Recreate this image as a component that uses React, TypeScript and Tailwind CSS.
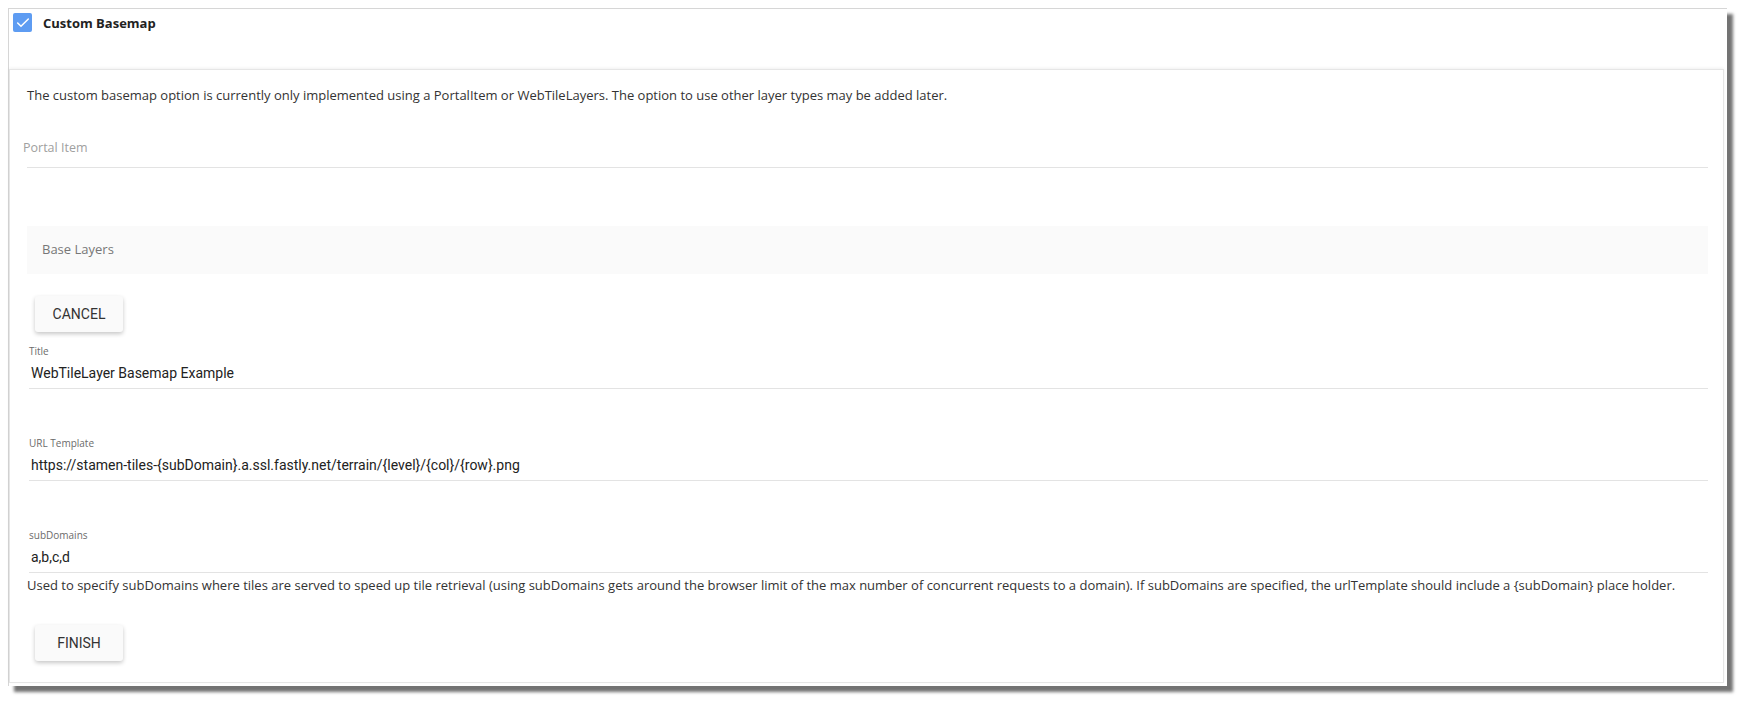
import { Check } from 'lucide-react';

const segoe = "font-['Open_Sans',sans-serif]";
const roboto = "font-['Roboto',sans-serif]";

function Field({ label, value }: { label: string; value: string }) {
  return (
    <div className="ml-[2px] border-b border-[#e3e3e3] pb-[5px]">
      <div className={`${segoe} h-[14px] text-[10px] leading-[14px] text-[#6b6b6b]`}>{label}</div>
      <div className={`${roboto} mt-[5px] h-[20px] pl-[2px] text-[14px] leading-[20px] text-[#222]`}>{value}</div>
    </div>
  );
}

function FlatButton({ children }: { children: string }) {
  return (
    <button
      className={`${roboto} ml-[8px] h-[36px] w-[88px] rounded-[3px] bg-[#fafafa] text-[14px] text-[#333] shadow-[0_2px_4px_rgba(0,0,0,0.22)]`}
    >
      {children}
    </button>
  );
}

export default function App() {
  return (
    <div className="h-[703px] w-[1745px] bg-white pl-[8px] pt-[8px]">
      <div className="flex h-[678px] w-[1719px] flex-col border-l border-t border-[#d6d6d6] bg-white pr-[3px] pb-[3px] shadow-[6px_6px_3px_rgba(0,0,0,0.55)]">
        {/* header */}
        <div className="flex h-[60px] items-start pl-[4px] pt-[4px]">
          <div className="flex h-[19px] w-[19px] items-center justify-center rounded-[2px] bg-[#5e9cf2]">
            <Check className="h-[16px] w-[16px] text-white" strokeWidth={2.25} />
          </div>
          <span className={`${segoe} ml-[11px] text-[13px] font-bold leading-[20px] text-[#222]`}>Custom Basemap</span>
        </div>

        {/* card */}
        <div className="flex flex-1 flex-col border border-[#e6e6e6] pl-[17px] pr-[15px] pt-[17px] shadow-[0_-1px_3px_rgba(0,0,0,0.06)]">
          <p className={`${segoe} text-[13px] leading-[17px] text-[#333]`}>
            The custom basemap option is currently only implemented using a PortalItem or WebTileLayers. The option to use other layer types may be added later.
          </p>

          <div className="mt-[35px] border-b border-[#e3e3e3] pb-[10px]">
            <div className={`${segoe} -ml-[4px] text-[12.5px] leading-[18px] text-[#a0a0a0]`}>Portal Item</div>
          </div>

          <div className={`${segoe} mt-[58px] flex h-[48px] items-center bg-[#fafafa] pl-[15px] text-[13px] text-[#777]`}>
            Base Layers
          </div>

          <div className="mt-[22px]">
            <FlatButton>CANCEL</FlatButton>
          </div>

          <div className="mt-[12px]">
            <Field label="Title" value="WebTileLayer Basemap Example" />
          </div>
          <div className="mt-[47px]">
            <Field label="URL Template" value="https://stamen-tiles-{subDomain}.a.ssl.fastly.net/terrain/{level}/{col}/{row}.png" />
          </div>
          <div className="mt-[47px]">
            <Field label="subDomains" value="a,b,c,d" />
          </div>
          <p className={`${segoe} mt-[4px] text-[13px] leading-[17px] text-[#333]`}>
            Used to specify subDomains where tiles are served to speed up tile retrieval (using subDomains gets around the browser limit of the max number of concurrent requests to a domain). If subDomains are specified, the urlTemplate should include a {'{subDomain}'} place holder.
          </p>

          <div className="mt-[31px]">
            <FlatButton>FINISH</FlatButton>
          </div>
        </div>
      </div>
    </div>
  );
}
